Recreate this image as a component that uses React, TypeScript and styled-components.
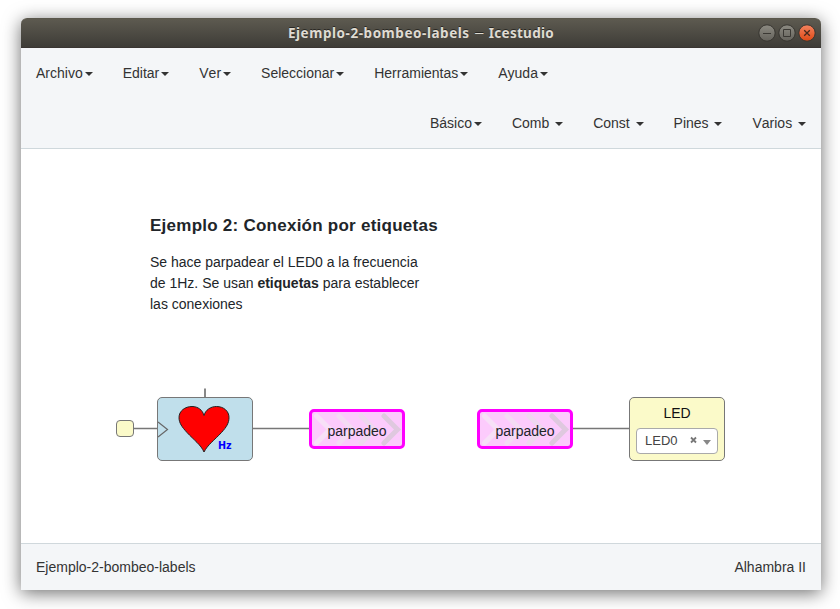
import React from "react";
import styled, { createGlobalStyle } from "styled-components";

const GlobalStyle = createGlobalStyle`
  *, *::before, *::after { box-sizing: border-box; }
  body {
    margin: 0;
    background: #fff;
    font-family: "Liberation Sans", Arial, sans-serif;
    font-size: 14px;
    line-height: 20px;
    color: #333;
  }
`;

const Desktop = styled.div`
  height: 609px;
  padding: 18px 19px 19px 21px;
  overflow: hidden;
`;

const Window = styled.div`
  display: flex;
  flex-direction: column;
  width: 800px;
  height: 572px;
  border-radius: 6px 6px 0 0;
  background: #fff;
  box-shadow: 0 3px 18px rgba(0, 0, 0, 0.58);
`;

const TitleBar = styled.header`
  display: grid;
  grid-template-columns: 80px 1fr 80px;
  align-items: center;
  height: 30px;
  flex: none;
  border-radius: 6px 6px 0 0;
  border-top: 1px solid #5a574c;
  border-bottom: 1px solid #3a3532;
  background: linear-gradient(#5d5a50, #3e3c37);
`;

const Title = styled.h1`
  display: flex;
  grid-column: 2;
  justify-content: center;
  gap: 5px;
  margin: 0;
  white-space: nowrap;
  font: bold 13.5px/28px "Noto Sans", sans-serif;
  letter-spacing: 0.3px;
  color: #dfdbd2;
  text-shadow: 0 -1px 0 rgba(0, 0, 0, 0.5);
`;

const FileName = styled.span`
  letter-spacing: 0.55px;
`;

const Dash = styled.span`
  font-size: 9px;
  font-weight: 600;
  letter-spacing: 0;
`;

const Controls = styled.div`
  display: flex;
  justify-content: flex-end;
  gap: 2px;
  padding-right: 5px;
`;

const Nav = styled.nav`
  height: 101px;
  flex: none;
  background: #f4f6f8;
  border-bottom: 1px solid #cfd8dc;
  font-kerning: none;
`;

const MenuRow = styled.div<{ $end?: boolean }>`
  display: flex;
  justify-content: ${(p) => (p.$end ? "flex-end" : "flex-start")};
`;

const MenuItem = styled.a<{ $spaced?: boolean }>`
  display: flex;
  align-items: center;
  padding: 15px;
  white-space: nowrap;
  &::after {
    content: "";
    margin-left: ${(p) => (p.$spaced ? 5.85 : 2)}px;
    margin-top: 2px;
    border-top: 4px solid #333;
    border-left: 4px solid transparent;
    border-right: 4px solid transparent;
  }
`;

const Canvas = styled.main`
  position: relative;
  flex: 1;
  background: #fff;
`;

const Note = styled.article`
  width: 300px;
  margin: 66px 0 0 129px;
  line-height: 21px;
  color: #212529;
`;

const NoteTitle = styled.h2`
  margin: 0 0 16px;
  font-size: 17px;
  letter-spacing: 0.25px;
  line-height: 21px;
  white-space: nowrap;
`;

const NoteText = styled.p`
  width: 280px;
  margin: 0;
`;

const Wires = styled.svg`
  position: absolute;
  inset: 0;
`;

const Node = styled.div<{ $x: number; $y: number; $w: number; $h: number; $fill: string }>`
  position: absolute;
  left: ${(p) => p.$x}px;
  top: ${(p) => p.$y}px;
  width: ${(p) => p.$w}px;
  height: ${(p) => p.$h}px;
  background: ${(p) => p.$fill};
  border: 1px solid #777;
  border-radius: 5px;
`;

const PinNode = styled(Node)`
  border-radius: 4px;
`;

const Drawing = styled.svg`
  display: block;
`;

const LabelNode = styled(Node)`
  border: 3px solid #f0f;
`;

const LabelName = styled.span`
  position: absolute;
  inset: 9px 0 auto;
  text-align: center;
  color: #212529;
`;

const LedNode = styled(Node)`
  padding: 5px 6px;
  text-align: center;
  color: #111;
`;

const Select = styled.div`
  display: flex;
  align-items: center;
  height: 26px;
  margin-top: 5px;
  padding: 0 5px 0 8px;
  border: 1px solid #aaa;
  border-radius: 4px;
  background: #fff;
  font-size: 13px;
  color: #444;
`;

const SelectIcons = styled.svg`
  margin-left: auto;
`;

const StatusBar = styled.footer`
  display: flex;
  justify-content: space-between;
  align-items: center;
  height: 47px;
  flex: none;
  padding: 0 15px;
  background: #f4f6f8;
  border-top: 1px solid #d0d8dc;
`;

const menus = ["Archivo", "Editar", "Ver", "Seleccionar", "Herramientas", "Ayuda"];
const blocks = ["Básico", "Comb", "Const", "Pines", "Varios"];

function WindowButton({ kind }: { kind: "min" | "max" | "close" }) {
  const close = kind === "close";
  return (
    <svg width="18" height="18" viewBox="0 0 18 18">
      <defs>
        <linearGradient id={`fill-${kind}`} x2="0" y2="1">
          <stop stopColor={close ? "#f48460" : "#8d8b82"} />
          <stop offset="1" stopColor={close ? "#dd4814" : "#64625b"} />
        </linearGradient>
      </defs>
      <circle cx="9" cy="9" r="8.2" fill={`url(#fill-${kind})`} stroke="#373530" />
      {kind === "min" && <path d="M5 9.5h8" stroke="#3b3934" />}
      {kind === "max" && <path d="M5.5 5.5h7v7h-7z" fill="none" stroke="#3b3934" />}
      {close && <path d="m6.2 6.2 5.6 5.6m0-5.6-5.6 5.6" stroke="#46291d" strokeWidth="1.3" />}
    </svg>
  );
}

function Label({ x }: { x: number }) {
  return (
    <LabelNode $x={x} $y={260} $w={96} $h={40} $fill="#fccbfc">
      <Drawing width="90" height="34" viewBox="0 0 90 34" fill="none" strokeWidth="5" strokeLinecap="round">
        <path d="M4.5 4 18 17.5 4.5 31" stroke="#f7e0f7" />
        <path d="M27 4 40.5 17.5 27 31" stroke="#f4dbf4" />
        <path d="M49 4 62.5 17.5 49 31" stroke="#efd7ef" />
        <path d="M72 4 85.5 17.5 72 31" stroke="#dfc8df" />
      </Drawing>
      <LabelName>parpadeo</LabelName>
    </LabelNode>
  );
}

export default function App() {
  return (
    <>
      <GlobalStyle />
      <Desktop>
        <Window>
          <TitleBar>
            <Title>
              <FileName>Ejemplo-2-bombeo-labels</FileName>
              <Dash>—</Dash>
              <span>Icestudio</span>
            </Title>
            <Controls>
              <WindowButton kind="min" />
              <WindowButton kind="max" />
              <WindowButton kind="close" />
            </Controls>
          </TitleBar>
          <Nav>
            <MenuRow>
              {menus.map((m) => (
                <MenuItem key={m}>{m}</MenuItem>
              ))}
            </MenuRow>
            <MenuRow $end>
              {blocks.map((b, i) => (
                <MenuItem key={b} $spaced={i > 0}>{b}</MenuItem>
              ))}
            </MenuRow>
          </Nav>
          <Canvas>
            <Wires width="800" height="394" fill="none" stroke="#777" strokeWidth="1.5">
              <path d="M112 279.5H137M231 279.5H289M551 279.5H609" />
              <path d="M184 239.5v9" stroke="#888" strokeWidth="2" />
            </Wires>
            <Note>
              <NoteTitle>Ejemplo 2: Conexión por etiquetas</NoteTitle>
              <NoteText>
                Se hace parpadear el LED0 a la frecuencia de 1Hz. Se usan <b>etiquetas</b> para establecer las conexiones
              </NoteText>
            </Note>
            <PinNode $x={95} $y={271} $w={18} $h={17} $fill="#fbfac9" />
            <Node $x={136} $y={248} $w={96} $h={64} $fill="#c0dfeb">
              <Drawing width="94" height="62" viewBox="0 0 94 62">
                <path d="M0 24 9.5 31.5 0 39" fill="none" stroke="#666" strokeWidth="1.2" />
                <path
                  d="M46 54C43 47 36 42 29 34.5C24 29 21 25 21 19.5C21 13 27 8.5 34 8.5C40 8.5 44.5 12 46 17.5C47.5 12 52.5 8.5 58.5 8.5C65.5 8.5 71 13 71 19.5C71 25 68.5 29 63.5 34.5C56.5 42 49.5 47 46 54Z"
                  fill="red"
                  stroke="#222"
                />
                <text x="60" y="51" fill="#00f" fontFamily="DejaVu Sans" fontWeight="700" fontSize="9.6">Hz</text>
              </Drawing>
            </Node>
            <Label x={288} />
            <Label x={456} />
            <LedNode $x={608} $y={248} $w={96} $h={64} $fill="#fbfac9">
              LED
              <Select>
                LED0
                <SelectIcons width="23" height="12" viewBox="0 0 23 12">
                  <path d="m2 2.5 5 5m0-5-5 5" stroke="#777" strokeWidth="1.8" />
                  <path d="M14 5h8l-4 5z" fill="#888" />
                </SelectIcons>
              </Select>
            </LedNode>
          </Canvas>
          <StatusBar>
            <span>Ejemplo-2-bombeo-labels</span>
            <span>Alhambra II</span>
          </StatusBar>
        </Window>
      </Desktop>
    </>
  );
}
